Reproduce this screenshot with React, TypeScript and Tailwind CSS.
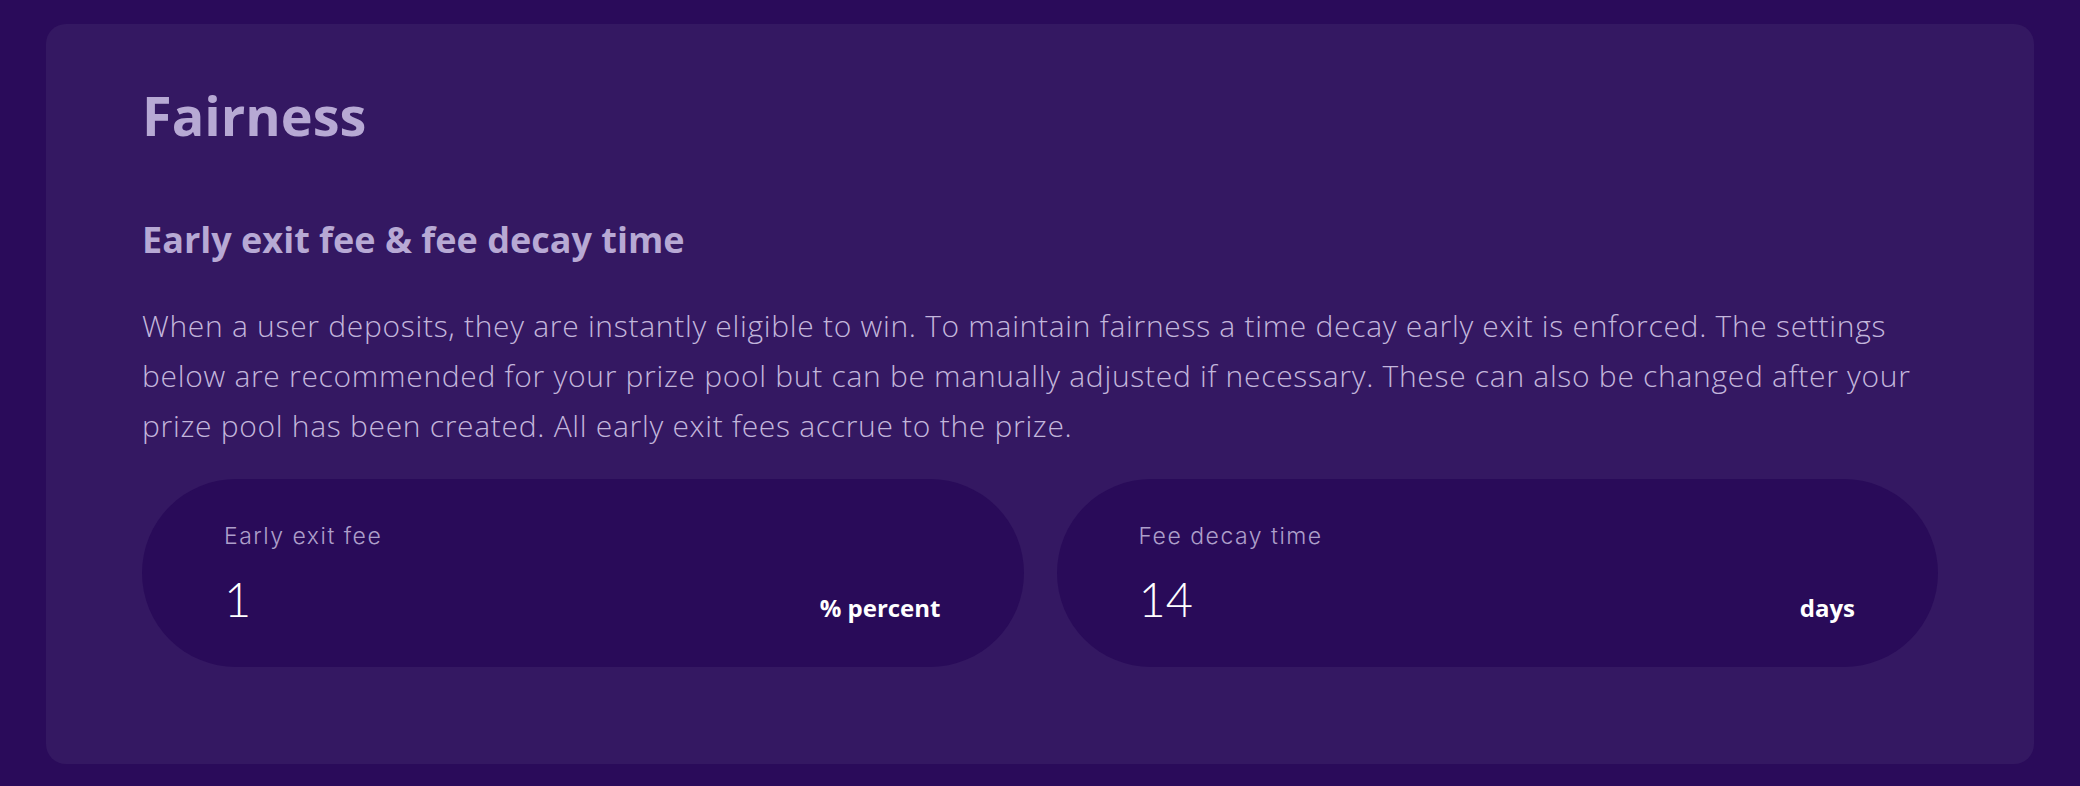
import React from "react";

function FieldBox({ label, value, unit }: { label: string; value: string; unit: string }) {
  return (
    <div className="flex-1 h-[188px] rounded-full bg-[#290b59] pl-[82px] pr-[83px] pt-[43px]">
      <div className="text-[23px] leading-[28px] font-light tracking-[1.5px] text-[#ad9fca] [font-family:Inter,'Noto_Sans',sans-serif]">
        {label}
      </div>
      <div className="mt-[21px] flex items-baseline justify-between">
        <span className="text-[47px] leading-[56px] font-light text-white [font-family:Lato,sans-serif]">{value}</span>
        <span className="text-[24px] leading-[30px] font-bold text-white [font-family:'Open_Sans',sans-serif]">{unit}</span>
      </div>
    </div>
  );
}

export default function App() {
  return (
    <div className="min-h-[786px] bg-[#2a0b5a] px-[46px] pt-[24px] pb-[22px] [font-family:'Open_Sans',sans-serif]">
      <div className="rounded-[20px] bg-[#341862] px-[96px] pt-[57px] pb-[97px]">
        <h1 className="text-[54px] leading-[68px] font-bold text-[#b7a9d4]">Fairness</h1>
        <h2 className="mt-[70px] text-[36px] leading-[42px] font-bold text-[#b7a9d4]">
          Early exit fee &amp; fee decay time
        </h2>
        <p className="mt-[40px] text-[30px] leading-[50px] font-light tracking-[0.7px] text-[#c3b6dc] whitespace-nowrap">
          When a user deposits, they are instantly eligible to win. To maintain fairness a time decay early exit is enforced. The settings
          <br />
          below are recommended for your prize pool but can be manually adjusted if necessary. These can also be changed after your
          <br />
          prize pool has been created. All early exit fees accrue to the prize.
        </p>
        <div className="mt-[28px] flex gap-[33px]">
          <FieldBox label="Early exit fee" value="1" unit="% percent" />
          <FieldBox label="Fee decay time" value="14" unit="days" />
        </div>
      </div>
    </div>
  );
}
